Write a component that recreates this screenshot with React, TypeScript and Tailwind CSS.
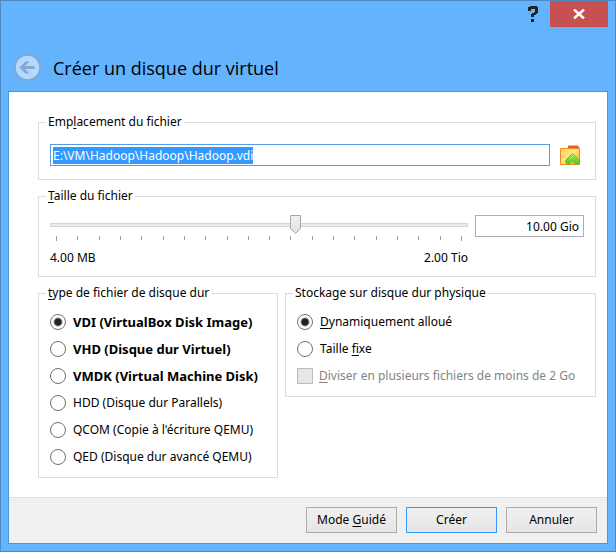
import { useEffect, useRef, useState } from "react";
import type { ReactNode } from "react";

const radioClass =
  "size-4 shrink-0 appearance-none rounded-full border border-[#707070] bg-white checked:bg-[radial-gradient(circle,#222222_3px,#ffffff_5px)]";
const buttonClass =
  "h-[26px] w-[91px] border bg-linear-to-b from-[#f0f0f0] to-[#e5e5e5] text-center leading-4";

const diskTypes: { id: string; label: string; recommended: boolean }[] = [
  { id: "vdi", label: "VDI (VirtualBox Disk Image)", recommended: true },
  { id: "vhd", label: "VHD (Disque dur Virtuel)", recommended: true },
  { id: "vmdk", label: "VMDK (Virtual Machine Disk)", recommended: true },
  { id: "hdd", label: "HDD (Disque dur Parallels)", recommended: false },
  { id: "qcow", label: "QCOM (Copie à l'écriture QEMU)", recommended: false },
  { id: "qed", label: "QED (Disque dur avancé QEMU)", recommended: false },
];

const ticks = Array.from({ length: 20 }, (_, i) => i);

function Key({ children }: { children: ReactNode }) {
  return <span className="underline underline-offset-2">{children}</span>;
}

function Group({ title, className, children }: { title: ReactNode; className?: string; children: ReactNode }) {
  return (
    <fieldset className={`min-w-0 border border-[#dcdcdc] px-[7px] ${className ?? ""}`}>
      <legend className="px-[2px] leading-4">{title}</legend>
      {children}
    </fieldset>
  );
}

function FolderIcon() {
  return (
    <svg width="20" height="20" viewBox="0 0 20 20" aria-hidden="true">
      <defs>
        <linearGradient id="folder" x1="0" y1="0" x2="1" y2="1">
          <stop offset="0" stopColor="#ffd04e" />
          <stop offset="0.45" stopColor="#ffe680" />
          <stop offset="1" stopColor="#f9a825" />
        </linearGradient>
        <linearGradient id="arrow" x1="0" y1="0" x2="0" y2="1">
          <stop offset="0" stopColor="#b8f060" />
          <stop offset="1" stopColor="#4fc414" />
        </linearGradient>
      </defs>
      <path d="M8 3V1.500Q8 0.500 9 0.500H17.500Q18.500 0.500 18.500 1.500L19.500 3V10H8Z" fill="#e8601c" />
      <path d="M0.500 3.500H19.500V19.500H0.500Z" fill="url(#folder)" stroke="#ee8a24" />
      <path d="M1.500 18V4.500H18.500" fill="none" stroke="#ffdc78" />
      <path
        d="M12.500 8.500L19.500 15.500V17L17.500 19.300H16L12.500 16L9 19.300H7.500L5.500 17V15.500Z"
        fill="url(#arrow)"
        stroke="#57b81c"
        strokeWidth="0.800"
      />
    </svg>
  );
}

function SizeSlider() {
  const [value, setValue] = useState(59);
  return (
    <div className="min-w-0 flex-1">
      <div className="relative h-[27px] pt-2">
        <div className="h-1 border border-[#d6d6d6] bg-[#e7eaea]" />
        <div className="mx-[6px] mt-[9px] flex justify-between">
          {ticks.map((i) => (
            <span key={i} className={`w-px bg-[#a0a0a0] ${i === 0 || i === 19 ? "h-[5px]" : "h-1"}`} />
          ))}
        </div>
        <div className="pointer-events-none absolute inset-x-[6px] top-0">
          <svg
            className="absolute -ml-[6px]"
            style={{ left: `${value}%` }}
            width="11"
            height="19"
            viewBox="0 0 11 19"
            aria-hidden="true"
          >
            <defs>
              <linearGradient id="thumb" x1="0" y1="0" x2="0" y2="1">
                <stop offset="0" stopColor="#f1f1f1" />
                <stop offset="1" stopColor="#e2e2e2" />
              </linearGradient>
            </defs>
            <path d="M0.500 0.500H10.500V13.500L5.500 18.500L0.500 13.500Z" fill="url(#thumb)" stroke="#a6a6a6" />
          </svg>
        </div>
        <input
          type="range"
          aria-label="Taille du fichier"
          min={0}
          max={100}
          value={value}
          onChange={(e) => setValue(Number(e.target.value))}
          className="absolute inset-x-0 top-0 h-5 w-full opacity-0"
        />
      </div>
      <div className="mt-2 flex justify-between leading-4">
        <span>4.00 MB</span>
        <span>2.00 Tio</span>
      </div>
    </div>
  );
}

export default function App() {
  const pathRef = useRef<HTMLInputElement>(null);
  const [diskType, setDiskType] = useState("vdi");
  const [storage, setStorage] = useState("dynamic");

  useEffect(() => {
    pathRef.current?.focus();
    pathRef.current?.select();
  }, []);

  return (
    <div className="flex min-h-screen flex-col border border-[#4d88c2] bg-[#64b3fd] px-[7px] pb-[7px] [font-family:'Noto_Sans',sans-serif] text-[12px] text-black">
      <header className="pb-[10px]">
        <div className="flex justify-end">
          <button type="button" aria-label="Aide" className="flex h-[26px] w-[34px] items-center justify-center">
            <svg width="10" height="16" viewBox="0 0 10 16" fill="#222222" shapeRendering="crispEdges" aria-hidden="true">
              <path d="M2 0H9V1H10V7H9V8H8V9H6V11H3V8H4V7H6V6H7V3H3V5H0V1H2ZM3 13H6V16H3Z" />
            </svg>
          </button>
          <button type="button" aria-label="Fermer" className="flex h-[26px] w-[58px] items-center justify-center bg-[#c75050]">
            <svg width="12" height="10" viewBox="0 0 12 10" fill="none" stroke="#ffffff" strokeWidth="2.500" aria-hidden="true">
              <path d="M1 0.500L11 9.500M11 0.500L1 9.500" />
            </svg>
          </button>
        </div>
        <div className="mt-[27px] flex items-center gap-3 pl-[6px]">
          <button type="button" aria-label="Retour" disabled>
            <svg width="27" height="27" viewBox="0 0 27 27" fill="none" aria-hidden="true">
              <circle cx="13.500" cy="13.500" r="12.500" fill="#b3d9fd" stroke="#7fa6cb" strokeWidth="1.500" />
              <path d="M5.500 13.500L11.500 7.500H15.500L11 12H20.500V15H11L15.500 19.500H11.500Z" fill="#83a9ce" />
            </svg>
          </button>
          <h1 className="pt-[2px] [font-family:'Open_Sans',sans-serif] text-[18px] leading-[25px]">Créer un disque dur virtuel</h1>
        </div>
      </header>

      <form
        className="flex flex-1 flex-col border border-[#4d95db] bg-white"
        onSubmit={(e) => e.preventDefault()}
      >
        <div className="flex flex-1 flex-col gap-2 px-[29px] pt-[22px] pr-[11px] pb-[18px]">
          <Group title={<label htmlFor="path">Emp<Key>l</Key>acement du fichier</label>}>
            <div className="flex items-center gap-[10px] px-1 pt-[14px] pb-[13px]">
              <input
                id="path"
                ref={pathRef}
                type="text"
                defaultValue="E:\VM\Hadoop\Hadoop\Hadoop.vdi"
                className="h-[22px] min-w-0 flex-1 border border-[#569de5] px-[2px] leading-4 outline-none selection:bg-[#3399ff] selection:text-white"
              />
              <button type="button" aria-label="Choisir un emplacement" className="mr-1">
                <FolderIcon />
              </button>
            </div>
          </Group>

          <Group title={<label htmlFor="size"><Key>T</Key>aille du fichier</label>}>
            <div className="flex items-start gap-[7px] px-1 pt-[11px] pb-[10px]">
              <SizeSlider />
              <input
                id="size"
                type="text"
                defaultValue="10.00 Gio"
                className="h-[22px] w-[109px] border border-[#abadb3] px-1 text-right leading-4 outline-none"
              />
            </div>
          </Group>

          <div className="flex items-start gap-[7px]">
            <Group className="w-[240px] shrink-0" title={<><Key>t</Key>ype de fichier de disque dur</>}>
              <div className="flex flex-col gap-[11px] px-1 pt-[13px] pb-3">
                {diskTypes.map((type) => (
                  <label
                    key={type.id}
                    className={`flex items-center gap-[7px] leading-4 whitespace-nowrap ${type.recommended ? "text-[13px] font-bold" : ""}`}
                  >
                    <input
                      type="radio"
                      name="disk-type"
                      checked={diskType === type.id}
                      onChange={() => setDiskType(type.id)}
                      className={radioClass}
                    />
                    {type.label}
                  </label>
                ))}
              </div>
            </Group>

            <Group className="flex-1" title="Stockage sur disque dur physique">
              <div className="flex flex-col gap-[11px] px-1 pt-[13px] pb-3 whitespace-nowrap">
                <label className="flex items-center gap-[7px] leading-4">
                  <input
                    type="radio"
                    name="storage"
                    checked={storage === "dynamic"}
                    onChange={() => setStorage("dynamic")}
                    className={radioClass}
                  />
                  <span><Key>D</Key>ynamiquement alloué</span>
                </label>
                <label className="flex items-center gap-[7px] leading-4">
                  <input
                    type="radio"
                    name="storage"
                    checked={storage === "fixed"}
                    onChange={() => setStorage("fixed")}
                    className={radioClass}
                  />
                  <span>Taille <Key>f</Key>ixe</span>
                </label>
                <label className="flex items-center gap-[6px] leading-4 text-[#838383]">
                  <input
                    type="checkbox"
                    disabled
                    className="size-4 shrink-0 appearance-none border border-[#bcbcbc] bg-[#e6e6e6]"
                  />
                  <span><Key>D</Key>iviser en plusieurs fichiers de moins de 2 Go</span>
                </label>
              </div>
            </Group>
          </div>
        </div>

        <footer className="flex justify-end gap-[9px] border-t border-[#dfdfdf] bg-[#f0f0f0] px-[10px] pt-[9px] pb-[10px]">
          <button type="button" className={`${buttonClass} border-[#acacac]`}>
            Mode <Key>G</Key>uidé
          </button>
          <button type="submit" className={`${buttonClass} border-[#3399ff]`}>Créer</button>
          <button type="button" className={`${buttonClass} border-[#acacac]`}>Annuler</button>
        </footer>
      </form>
    </div>
  );
}
